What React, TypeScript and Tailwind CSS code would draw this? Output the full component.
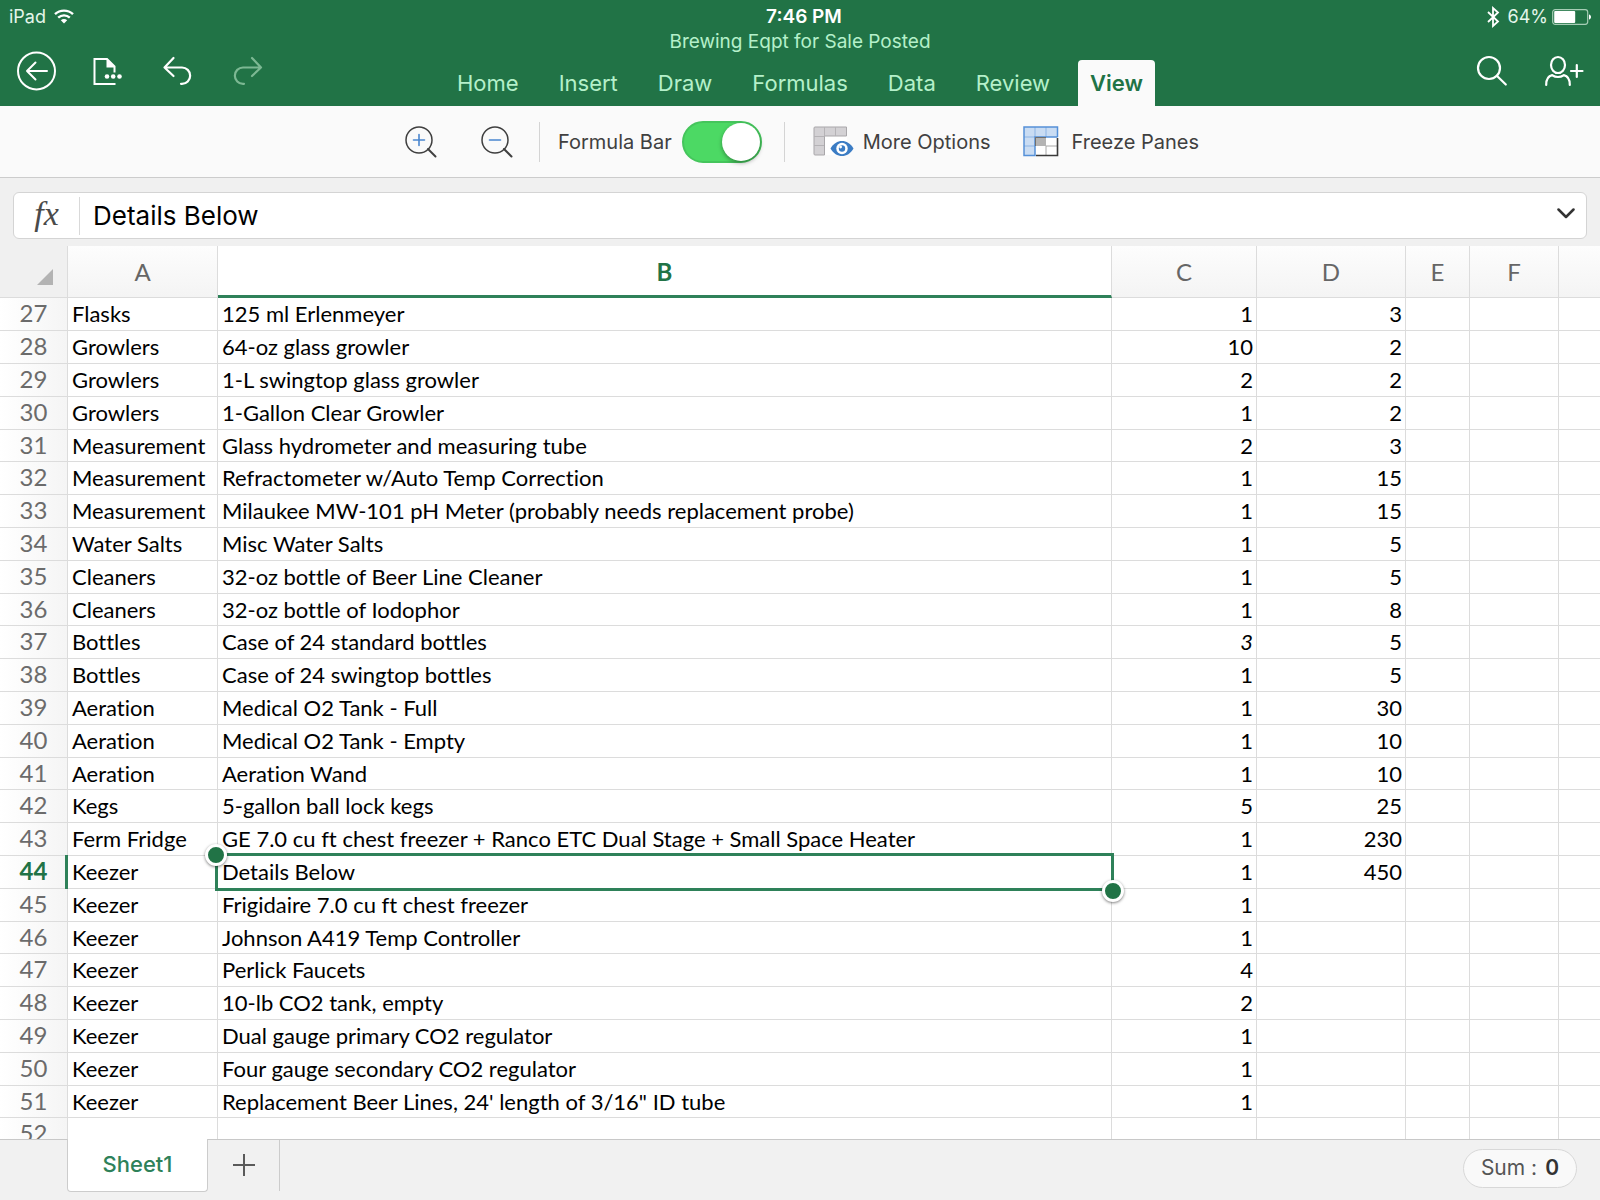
import React from "react";

type Row = { n: number; a?: string; b?: string; c?: string; d?: string; italic?: boolean };

const rows: Row[] = [
  { n: 27, a: "Flasks", b: "125 ml Erlenmeyer", c: "1", d: "3" },
  { n: 28, a: "Growlers", b: "64-oz glass growler", c: "10", d: "2" },
  { n: 29, a: "Growlers", b: "1-L swingtop glass growler", c: "2", d: "2" },
  { n: 30, a: "Growlers", b: "1-Gallon Clear Growler", c: "1", d: "2" },
  { n: 31, a: "Measurement", b: "Glass hydrometer and measuring tube", c: "2", d: "3" },
  { n: 32, a: "Measurement", b: "Refractometer w/Auto Temp Correction", c: "1", d: "15" },
  { n: 33, a: "Measurement", b: "Milaukee MW-101 pH Meter (probably needs replacement probe)", c: "1", d: "15" },
  { n: 34, a: "Water Salts", b: "Misc Water Salts", c: "1", d: "5" },
  { n: 35, a: "Cleaners", b: "32-oz bottle of Beer Line Cleaner", c: "1", d: "5" },
  { n: 36, a: "Cleaners", b: "32-oz bottle of Iodophor", c: "1", d: "8" },
  { n: 37, a: "Bottles", b: "Case of 24 standard bottles", c: "3", d: "5", italic: true },
  { n: 38, a: "Bottles", b: "Case of 24 swingtop bottles", c: "1", d: "5" },
  { n: 39, a: "Aeration", b: "Medical O2 Tank - Full", c: "1", d: "30" },
  { n: 40, a: "Aeration", b: "Medical O2 Tank - Empty", c: "1", d: "10" },
  { n: 41, a: "Aeration", b: "Aeration Wand", c: "1", d: "10" },
  { n: 42, a: "Kegs", b: "5-gallon ball lock kegs", c: "5", d: "25" },
  { n: 43, a: "Ferm Fridge", b: "GE 7.0 cu ft chest freezer + Ranco ETC Dual Stage + Small Space Heater", c: "1", d: "230" },
  { n: 44, a: "Keezer", b: "Details Below", c: "1", d: "450" },
  { n: 45, a: "Keezer", b: "Frigidaire 7.0 cu ft chest freezer", c: "1" },
  { n: 46, a: "Keezer", b: "Johnson A419 Temp Controller", c: "1" },
  { n: 47, a: "Keezer", b: "Perlick Faucets", c: "4" },
  { n: 48, a: "Keezer", b: "10-lb CO2 tank, empty", c: "2" },
  { n: 49, a: "Keezer", b: "Dual gauge primary CO2 regulator", c: "1" },
  { n: 50, a: "Keezer", b: "Four gauge secondary CO2 regulator", c: "1" },
  { n: 51, a: "Keezer", b: "Replacement Beer Lines, 24' length of 3/16\" ID tube", c: "1" },
  { n: 52 },
];

const SELECTED_ROW = 44;
const tabs = ["Home", "Insert", "Draw", "Formulas", "Data", "Review", "View"];

function WifiIcon() {
  return (
    <svg width="20" height="15" viewBox="0 0 20 15" fill="none" stroke="white" strokeWidth="2.4" aria-hidden="true">
      <path d="M1 5.2C6 .4 14 .4 19 5.2" />
      <path d="M4.2 8.6c3.3-3 8.300-3 11.600 0" />
      <path d="M10 14.500l-3.200-3.300c1.800-1.600 4.600-1.600 6.400 0z" fill="white" stroke="none" />
    </svg>
  );
}

function BackIcon() {
  return (
    <svg width="40" height="40" viewBox="0 0 40 40" fill="none" stroke="white" strokeWidth="2" strokeLinecap="round" strokeLinejoin="round" aria-hidden="true">
      <circle cx="20.500" cy="20" r="18.500" />
      <path d="M31 20H11M19.500 11.500L11 20l8.500 8.500" />
    </svg>
  );
}

function FileIcon() {
  return (
    <svg width="32" height="32" viewBox="0 0 32 32" fill="none" stroke="white" strokeWidth="2" aria-hidden="true">
      <path d="M23.500 29H2.500V4H15l7.500 7.500V17.500" />
      <path d="M14.500 4v8.500H23z" fill="white" stroke="none" />
      <g fill="white" stroke="none">
        <circle cx="15" cy="21.500" r="2.300" />
        <circle cx="21.200" cy="21.500" r="2.300" />
        <circle cx="27.500" cy="21.500" r="2.300" />
      </g>
    </svg>
  );
}

function UndoIcon() {
  return (
    <svg width="36" height="32" viewBox="0 0 36 32" fill="none" stroke="white" strokeWidth="2.200" strokeLinecap="round" strokeLinejoin="round" aria-hidden="true">
      <path d="M13.500 3L4.500 12.500l9 8.500M4.500 12.500H22a8 8 0 0 1 0 16.300h-1" />
    </svg>
  );
}

function RedoIcon() {
  return (
    <svg width="36" height="32" viewBox="0 0 36 32" fill="none" stroke="#7cb893" strokeWidth="2.200" strokeLinecap="round" strokeLinejoin="round" aria-hidden="true">
      <path d="M20 3l9 9.500-9 8.500M29 12.500H11a8 8 0 0 0 0 16.300h1" />
    </svg>
  );
}

function SearchIcon() {
  return (
    <svg width="32" height="32" viewBox="0 0 32 32" fill="none" stroke="white" strokeWidth="2.200" strokeLinecap="round" aria-hidden="true">
      <circle cx="13" cy="13" r="11" />
      <path d="M20.800 20.800l9 8.700" />
    </svg>
  );
}

function ShareIcon() {
  return (
    <svg width="40" height="32" viewBox="0 0 40 32" fill="none" stroke="white" strokeWidth="2.200" strokeLinecap="round" aria-hidden="true">
      <ellipse cx="14" cy="10" rx="7" ry="8" />
      <path d="M2.200 30c0-5.500 2.200-9 6-9.800 3.500 2.200 8 2.200 11.600 0 3.800.8 6 4.300 6 9.800M27 16h11.500M32.800 10v12" />
    </svg>
  );
}

function BluetoothIcon() {
  return (
    <svg width="14" height="22" viewBox="0 0 14 22" fill="none" stroke="white" strokeWidth="1.800" aria-hidden="true">
      <path d="M2 6l10 9.500L7 20V2l5 4.500L2 16" />
    </svg>
  );
}

function BatteryIcon() {
  return (
    <svg width="40" height="16" viewBox="0 0 40 16" aria-hidden="true">
      <rect x=".7" y=".7" width="35" height="14.600" rx="2.500" fill="none" stroke="#a6cdb5" strokeWidth="1.200" />
      <rect x="2.200" y="2" width="21" height="12" rx="1" fill="white" />
      <path d="M37 5.500c2.700.5 2.700 4.500 0 5z" fill="white" />
    </svg>
  );
}

function ZoomIcon({ plus }: { plus: boolean }) {
  return (
    <svg width="32" height="32" viewBox="0 0 32 32" fill="none" strokeLinecap="round" aria-hidden="true">
      <circle cx="14" cy="14" r="13" stroke="#3f3f3f" strokeWidth="1.500" />
      <path d="M23 23l7.500 7.500" stroke="#3f3f3f" strokeWidth="2" />
      <path d={plus ? "M8.500 14h11M14 8.500v11" : "M8.500 14h11"} stroke="#4a86cf" strokeWidth="1.600" />
    </svg>
  );
}

function MoreOptionsIcon() {
  return (
    <svg width="42" height="32" viewBox="0 0 42 32" fill="none" aria-hidden="true">
      <rect x="11" y="10" width="23" height="19" fill="white" />
      <path d="M2 1h31.500v9H11.500v19H2a1 1 0 0 1-1-1V2a1 1 0 0 1 1-1z" fill="#d3d1d4" stroke="#a9a7aa" />
      <path d="M11.500 1v9.500M22.500 1v9M1 10.500h10M1 19.500h10" stroke="#b5b3b6" />
      <path d="M17.500 22.500C23 12.500 35 12.500 40.500 22.500 35 32.500 23 32.500 17.500 22.500z" fill="#3b7cc4" />
      <circle cx="29" cy="22.500" r="5.700" fill="white" />
      <circle cx="29" cy="22.500" r="3.200" fill="#3b7cc4" />
      <circle cx="27.600" cy="21" r="1.400" fill="white" />
    </svg>
  );
}

function FreezeIcon() {
  return (
    <svg width="36" height="32" viewBox="0 0 36 32" fill="none" aria-hidden="true">
      <rect x="12" y="11" width="22.500" height="18.500" fill="white" />
      <path d="M1 1h33.500v10H12v18.500H1z" fill="#c9dcf3" />
      <rect x="12" y="11" width="11" height="9" fill="#b4b4b4" />
      <path d="M12 1v10M23 1v10M1 11h11M1 20h11" stroke="#8db4e4" />
      <path d="M23 20v9M23 20h11" stroke="#a8a8a8" />
      <path d="M34.500 11V1H1v28.500h11V11h22.500" stroke="#5590d8" strokeWidth="1.500" />
      <path d="M23 11.500H12.500V20" stroke="#6f6f6f" />
      <path d="M34.500 12v17.500H13" stroke="#3a3a3a" strokeWidth="1.600" />
    </svg>
  );
}

function Header() {
  return (
    <header className="grid shrink-0 grid-cols-[1fr_auto_1fr] bg-[#217346] text-white">
      <div>
        <div className="flex h-8 items-center gap-2 pt-px pl-[9px] text-lg text-[#e4f6ea]">
          <span>iPad</span>
          <WifiIcon />
        </div>
        <div className="mt-2 flex h-[62px] items-center gap-9 pl-4">
          <button aria-label="Back"><BackIcon /></button>
          <button aria-label="File"><FileIcon /></button>
          <button aria-label="Undo"><UndoIcon /></button>
          <button aria-label="Redo" disabled><RedoIcon /></button>
        </div>
      </div>
      <div className="flex flex-col items-center">
        <div className="flex h-[34px] items-center pl-2 text-[19px] font-semibold">7:46 PM</div>
        <div className="flex h-4 items-center text-[19px] text-[#b5f0ca]">Brewing Eqpt for Sale Posted</div>
        <nav className="mt-[10px] flex h-[46px] gap-4" aria-label="Ribbon">
          {tabs.map((t) => (
            <button
              key={t}
              className={
                t === "View"
                  ? "rounded-t bg-[#fafafa] px-3 text-[22px] font-semibold text-[#217346]"
                  : "px-3 text-[22px] text-[#b5f0ca]"
              }
            >
              {t}
            </button>
          ))}
        </nav>
      </div>
      <div className="flex flex-col items-end">
        <div className="flex h-8 items-center gap-1 pt-px pr-2 text-lg text-[#e4f6ea]">
          <BluetoothIcon />
          <span className="ml-1">64%</span>
          <BatteryIcon />
        </div>
        <div className="mt-2 flex h-[62px] items-center gap-9 pr-4">
          <button aria-label="Search"><SearchIcon /></button>
          <button aria-label="Share"><ShareIcon /></button>
        </div>
      </div>
    </header>
  );
}

function Toolbar() {
  return (
    <div className="flex h-[72px] shrink-0 items-center justify-center border-b border-[#cccccc] bg-[#fafafa] pl-1 text-xl text-[#404040]">
      <button aria-label="Zoom in" className="mr-11"><ZoomIcon plus /></button>
      <button aria-label="Zoom out" className="mr-[26px]"><ZoomIcon plus={false} /></button>
      <div className="mr-[18px] h-10 w-px bg-[#d4d4d4]" />
      <label htmlFor="formula-bar-switch" className="mr-[10px]">Formula Bar</label>
      <input
        id="formula-bar-switch"
        type="checkbox"
        defaultChecked
        className="mr-[22px] flex h-[42px] w-20 appearance-none items-center justify-end rounded-full border-2 border-[#45c55c] bg-[#4cd964] before:size-[38px] before:rounded-full before:bg-white before:shadow-[0_2px_4px_rgba(0,0,0,0.35)]"
      />
      <div className="mr-7 h-10 w-px bg-[#d4d4d4]" />
      <button className="mr-8 flex items-center gap-2"><MoreOptionsIcon />More Options</button>
      <button className="flex items-center gap-[13px]"><FreezeIcon />Freeze Panes</button>
    </div>
  );
}

function FormulaBar() {
  return (
    <div className="shrink-0 bg-[#f0f0f0] px-[13px] pt-[14px] pb-[7px]">
      <div className="flex h-[47px] items-center rounded-md border border-[#d4d4d4] bg-white">
        <label htmlFor="formula" className="w-[65px] pb-1 text-center font-['Liberation_Serif'] text-[34px] leading-9 text-[#4a4a4a] italic">fx</label>
        <div className="h-[38px] w-px bg-[#d9d9d9]" />
        <input id="formula" defaultValue="Details Below" className="min-w-0 flex-1 px-[13px] text-[26px] text-black outline-none" />
        <button aria-label="Expand formula bar" className="mr-[11px] pb-1">
          <svg width="18" height="12" viewBox="0 0 18 12" fill="none" stroke="#333333" strokeWidth="2.500" strokeLinecap="round" strokeLinejoin="round" aria-hidden="true">
            <path d="M1.500 1.500L9 9l7.500-7.500" />
          </svg>
        </button>
      </div>
    </div>
  );
}

function Sheet() {
  const line = "border-r border-b border-[#dcdcdc]";
  const colHead = "border-r border-b border-[#dcdcdc] bg-linear-to-b from-[#fdfdfd] to-[#f4f4f4] p-0 font-normal";
  return (
    <main className="min-h-0 flex-1 overflow-hidden bg-white font-[Lato,'Noto_Sans',sans-serif] [font-variant-ligatures:none]">
      <table className="w-full table-fixed border-separate border-spacing-0">
        <colgroup>
          <col className="w-[68px]" />
          <col className="w-[150px]" />
          <col />
          <col className="w-[145px]" />
          <col className="w-[149px]" />
          <col className="w-16" />
          <col className="w-[89px]" />
          <col className="w-[41px]" />
        </colgroup>
        <thead>
          <tr className="h-[52px] text-2xl text-[#666666]">
            <td className="border-r border-b border-[#dcdcdc] bg-[#f0f0f0] p-0">
              <button aria-label="Select all" className="ml-[37px] block pt-[10px]">
                <svg width="16" height="16" viewBox="0 0 16 16" aria-hidden="true"><path d="M16 0v16H0z" fill="#b3b3b3" /></svg>
              </button>
            </td>
            <th className={colHead}>A</th>
            <th className="border-r border-b-3 border-r-[#dcdcdc] border-b-[#2e8159] bg-white p-0 pt-[2px] font-bold text-[#217346]">B</th>
            <th className={colHead}>C</th>
            <th className={colHead}>D</th>
            <th className={colHead}>E</th>
            <th className={colHead}>F</th>
            <td className="border-b border-[#dcdcdc] bg-linear-to-b from-[#fdfdfd] to-[#f4f4f4]" />
          </tr>
        </thead>
        <tbody>
          {rows.map((r) => {
            const sel = r.n === SELECTED_ROW;
            return (
              <tr key={r.n} className="h-[33px] text-[22px] leading-6 whitespace-nowrap text-black nth-[5n]:h-8">
                <th
                  scope="row"
                  className={
                    sel
                      ? "relative border-r border-b border-[#dcdcdc] bg-linear-to-r from-white to-[#f5f5f5] p-0 pb-[2px] text-2xl leading-6 font-bold text-[#217346]"
                      : "border-r border-b border-[#dcdcdc] bg-linear-to-r from-white to-[#f5f5f5] p-0 pb-[2px] text-2xl leading-6 font-normal text-[#6b6b6b]"
                  }
                >
                  {r.n}
                  {sel && <span className="absolute -top-px -right-px -bottom-px w-[3px] bg-[#2e8159]" />}
                </th>
                <td className={`${line} p-0 pl-1`}>{r.a}</td>
                <td className={`${line} relative p-0 pl-1`}>
                  {r.b}
                  {sel && (
                    <div className="absolute -inset-[3px] z-10 border-3 border-[#2e8159]">
                      <span className="absolute -top-[12px] -left-[13px] size-[22px] rounded-full border-3 border-white bg-[#217346] shadow-[0_1px_3px_rgba(0,0,0,0.5)]" />
                      <span className="absolute -right-[13px] -bottom-[14px] size-[22px] rounded-full border-3 border-white bg-[#217346] shadow-[0_1px_3px_rgba(0,0,0,0.5)]" />
                    </div>
                  )}
                </td>
                <td className={`${line} p-0 pr-[3px] text-right ${r.italic ? "italic" : ""}`}>{r.c}</td>
                <td className={`${line} p-0 pr-[3px] text-right`}>{r.d}</td>
                <td className={line} />
                <td className={line} />
                <td className="border-b border-[#dcdcdc]" />
              </tr>
            );
          })}
        </tbody>
      </table>
    </main>
  );
}

function Footer() {
  return (
    <footer className="relative z-20 flex h-[61px] shrink-0 items-start border-t border-[#c8c8c8] bg-[#f1f1f1] pl-[67px]">
      <button className="-mt-px h-[53px] w-[141px] rounded-b border border-t-0 border-[#cccccc] bg-white pb-[2px] text-[22px] font-medium text-[#2e8159]">Sheet1</button>
      <button aria-label="Add sheet" className="flex h-[51px] w-[72px] items-center justify-center border-r border-[#cccccc] pb-[2px]">
        <svg width="22" height="22" viewBox="0 0 22 22" stroke="#5a5a5a" strokeWidth="2" aria-hidden="true"><path d="M11 0v22M0 11h22" /></svg>
      </button>
      <div className="mt-[9px] mr-[23px] ml-auto flex h-[39px] items-center gap-2 rounded-full border border-[#d8d8d8] bg-[#f9f9f9] px-[17px] pb-px text-[21px] text-[#555555]">
        <span>Sum :</span>
        <span className="font-semibold text-[#333333]">0</span>
      </div>
    </footer>
  );
}

export default function App() {
  return (
    <div className="flex h-screen flex-col overflow-hidden bg-white font-[Inter,sans-serif]">
      <Header />
      <Toolbar />
      <FormulaBar />
      <Sheet />
      <Footer />
    </div>
  );
}
